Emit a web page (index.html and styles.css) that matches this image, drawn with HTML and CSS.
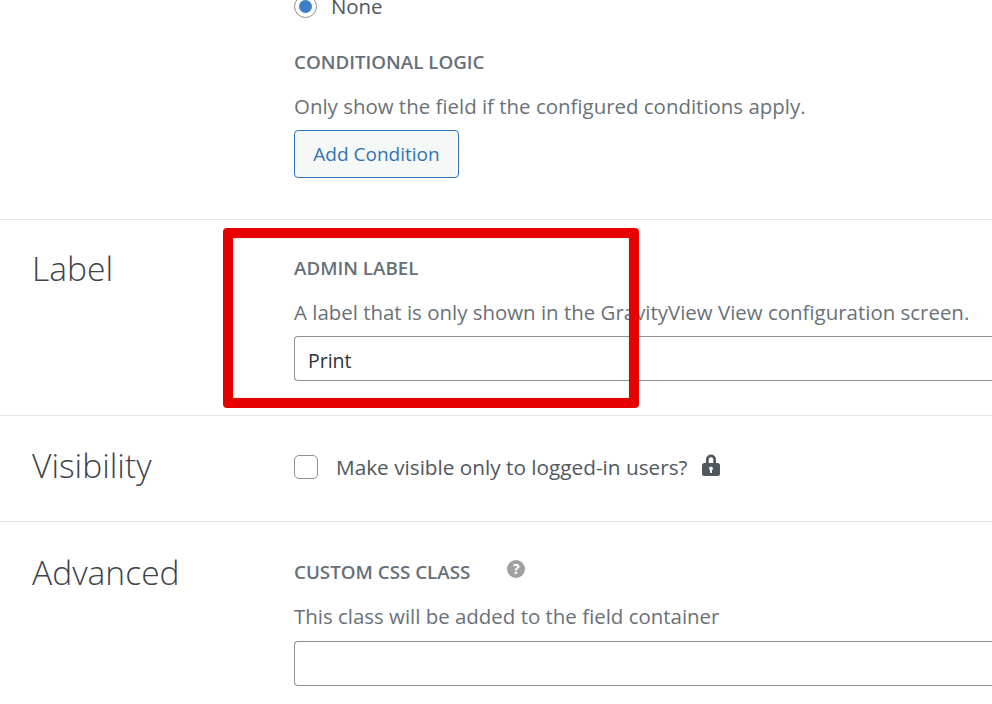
FILE: index.html
```html
<!DOCTYPE html>
<html lang="en">
<head>
    <meta charset="UTF-8">
    <meta name="viewport" content="width=device-width, initial-scale=1.0">
    <title>Field Settings</title>
    <link rel="stylesheet" href="styles.css">
</head>
<body>
    <div class="settings">
        <section class="row row-first">
            <h2 class="row-title"></h2>
            <div class="row-body">
                <label class="radio-line">
                    <span class="radio"><span class="radio-dot"></span></span>
                    <span>None</span>
                </label>
                <h3 class="field-title logic-title">CONDITIONAL LOGIC</h3>
                <p class="hint">Only show the field if the configured conditions apply.</p>
                <button class="btn">Add Condition</button>
            </div>
        </section>

        <section class="row row-label">
            <h2 class="row-title">Label</h2>
            <div class="row-body">
                <h3 class="field-title">ADMIN LABEL</h3>
                <p class="hint">A label that is only shown in the GravityView View configuration screen.</p>
                <div class="input">Print</div>
            </div>
            <div class="highlight"></div>
        </section>

        <section class="row row-visibility">
            <h2 class="row-title">Visibility</h2>
            <div class="row-body check-line">
                <span class="checkbox"></span>
                <span class="check-text">Make visible only to logged-in users?</span>
                <svg class="lock" viewBox="0 0 20 24" width="20" height="24">
                    <path fill="#50575e" fill-rule="evenodd" d="M5 10V6.500a5 5 0 0 1 10 0V10h1.500A2.500 2.500 0 0 1 19 12.500v8a2.500 2.500 0 0 1-2.500 2.500h-13A2.500 2.500 0 0 1 1 20.500v-8A2.500 2.500 0 0 1 3.500 10zM7.700 10h4.600V6.500a2.300 2.300 0 0 0-4.600 0zM10 13.500a2 2 0 0 0-1 3.700V20h2v-2.800a2 2 0 0 0-1-3.700z"/>
                </svg>
            </div>
        </section>

        <section class="row row-advanced">
            <h2 class="row-title">Advanced</h2>
            <div class="row-body">
                <h3 class="field-title">CUSTOM CSS CLASS
                    <span class="help">?</span>
                </h3>
                <p class="hint">This class will be added to the field container</p>
                <div class="input input-empty"></div>
            </div>
        </section>
    </div>
</body>
</html>
```

FILE: styles.css
```css
html, body { margin: 0; height: 704px; overflow: hidden; background: #fff; }
body { font-family: "Open Sans", "Noto Sans", sans-serif; color: #50575e; }
.settings { margin-top: -7px; }
.row { display: flex; position: relative; border-bottom: 1px solid #e2e4e7; }
.row-title { width: 294px; flex: none; margin: 0; padding-left: 32px; box-sizing: border-box; font-size: 33.600px; font-weight: 300; line-height: 44px; color: #3c434a; }
.row-body { flex: 1; min-width: 0; }
.row-first { height: 226px; }
.row-label { height: 195px; }
.row-label .row-title { padding-top: 26px; }
.row-label .row-body { padding-top: 35px; }
.row-visibility { height: 105px; }
.row-visibility .row-title { padding-top: 27px; }
.row-advanced { border-bottom: 0; }
.row-advanced .row-title { padding-top: 28px; }
.row-advanced .row-body { padding-top: 37px; }

.radio-line { display: flex; align-items: center; gap: 14px; font-size: 20.400px; line-height: 26px; color: #50575e; }
.radio { width: 23px; height: 23px; box-sizing: border-box; border: 1px solid #8c8f94; border-radius: 50%; display: flex; align-items: center; justify-content: center; }
.radio-dot { width: 13px; height: 13px; border-radius: 50%; background: #3a7fc8; }

.field-title { margin: 0; font-size: 18.800px; font-weight: 600; line-height: 26px; color: #667079; }
.logic-title { margin-top: 30px; }
.hint { margin: 18px 0 0; font-size: 20.450px; line-height: 27px; color: #6a7178; white-space: nowrap; }
.btn { display: block; width: 165px; height: 48px; margin-top: 10px; padding: 0; box-sizing: border-box; border: 1px solid #2e74b8; border-radius: 4px; background: #f6f7f7; color: #2e74b8; font-family: inherit; font-size: 19px; }
.input { height: 45px; margin-top: 10px; padding-left: 13px; box-sizing: border-box; border: 1px solid #8c8f94; border-right: 0; border-radius: 4px 0 0 4px; font-size: 19.500px; line-height: 47px; color: #2c3338; }
.input-empty { margin-top: 11px; }

.highlight { position: absolute; left: 223px; top: 8px; width: 416px; height: 180px; box-sizing: border-box; border: 10px solid #e60000; border-radius: 4px; box-shadow: inset 0 0 1px #888; }

.check-line { display: flex; align-items: flex-start; padding-top: 39px; }
.checkbox { width: 24px; height: 24px; box-sizing: border-box; border: 1px solid #8c8f94; border-radius: 5px; }
.check-text { margin: -1px 0 0 18px; font-size: 20.750px; line-height: 26px; }
.lock { margin: -2px 0 0 13px; }

.help { display: inline-block; width: 18px; height: 18px; margin-left: 32px; border-radius: 50%; background: #a0a0a0; color: #fff; font-size: 14px; font-weight: 700; line-height: 18px; text-align: center; vertical-align: 5px; }
```
